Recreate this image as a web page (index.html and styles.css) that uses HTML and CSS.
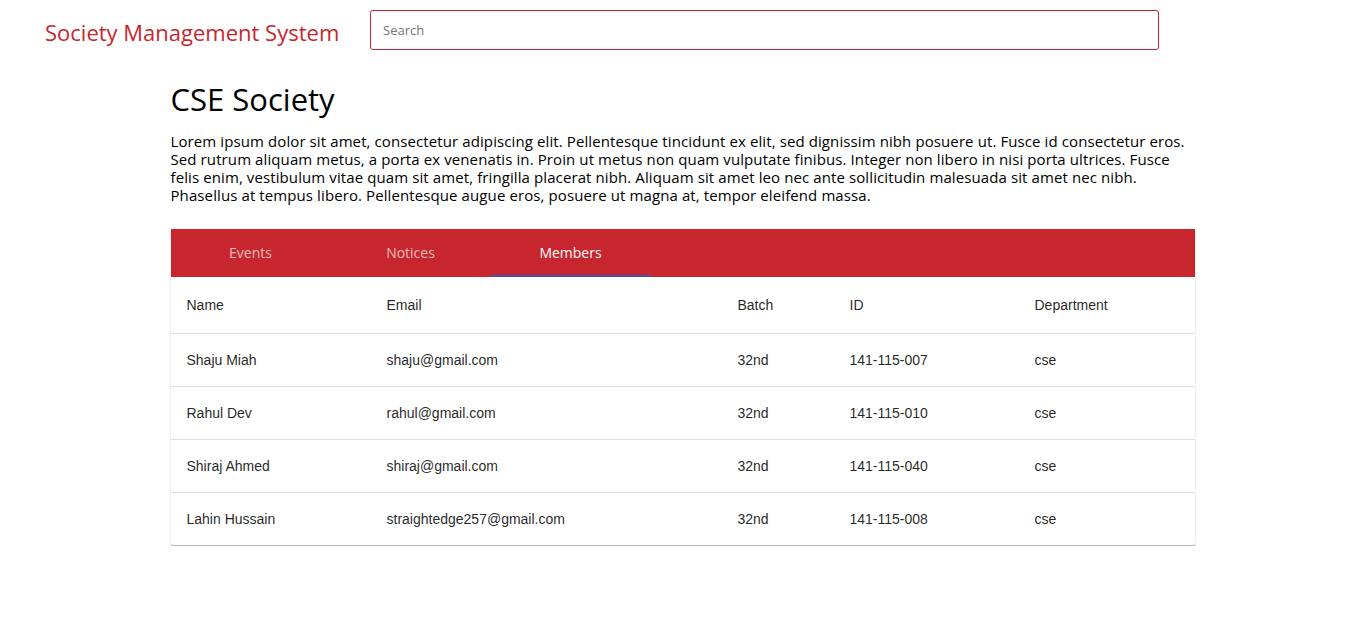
FILE: index.html
```html
<!DOCTYPE html>
<html>
<head>
<meta charset="utf-8">
<title>Society Management System</title>
<link rel="stylesheet" href="styles.css">
</head>
<body>
<header class="topbar">
  <div class="brand">Society Management System</div>
  <input class="search" type="text" placeholder="Search">
</header>
<main class="container">
  <h1 class="title">CSE Society</h1>
  <p class="desc">Lorem ipsum dolor sit amet, consectetur adipiscing elit. Pellentesque tincidunt ex elit, sed dignissim nibh posuere ut. Fusce id consectetur eros. Sed rutrum aliquam metus, a porta ex venenatis in. Proin ut metus non quam vulputate finibus. Integer non libero in nisi porta ultrices. Fusce felis enim, vestibulum vitae quam sit amet, fringilla placerat nibh. Aliquam sit amet leo nec ante sollicitudin malesuada sit amet nec nibh. Phasellus at tempus libero. Pellentesque augue eros, posuere ut magna at, tempor eleifend massa.</p>
  <section class="card">
    <nav class="tabs">
      <div class="tab">Events</div>
      <div class="tab">Notices</div>
      <div class="tab active">Members</div>
    </nav>
    <table class="members">
      <thead>
        <tr><th class="c-name">Name</th><th class="c-email">Email</th><th class="c-batch">Batch</th><th class="c-id">ID</th><th>Department</th></tr>
      </thead>
      <tbody>
        <tr><td>Shaju Miah</td><td>shaju@gmail.com</td><td>32nd</td><td>141-115-007</td><td>cse</td></tr>
        <tr><td>Rahul Dev</td><td>rahul@gmail.com</td><td>32nd</td><td>141-115-010</td><td>cse</td></tr>
        <tr><td>Shiraj Ahmed</td><td>shiraj@gmail.com</td><td>32nd</td><td>141-115-040</td><td>cse</td></tr>
        <tr><td>Lahin Hussain</td><td>straightedge257@gmail.com</td><td>32nd</td><td>141-115-008</td><td>cse</td></tr>
      </tbody>
    </table>
  </section>
</main>
</body>
</html>
```

FILE: styles.css
```css
* { box-sizing: border-box; }
body {
  margin: 0;
  font-family: "Open Sans", "Noto Sans", sans-serif;
  color: #000;
  background: #fff;
}
.topbar {
  display: flex;
  align-items: center;
  height: 60px;
  padding-left: 45px;
}
.brand {
  color: #c8262e;
  font-size: 22px;
  width: 325px;
  white-space: nowrap;
  padding-top: 4px;
}
.search {
  width: 789px;
  height: 40px;
  border: 1px solid #c8262e;
  border-radius: 3px;
  padding: 0 12px;
  font-family: "Open Sans", sans-serif;
  font-size: 13px;
  outline: none;
}
.search::placeholder { color: #757575; }
.container {
  width: 1024px;
  margin: 0 auto;
}
.title {
  font-weight: 400;
  font-size: 31px;
  margin: 20px 0 0;
  line-height: 38px;
}
.desc {
  margin: 14px 0 25px;
  font-size: 15px;
  line-height: 18px;
  letter-spacing: 0.1px;
}
.card {
  box-shadow: 0 1px 2px 0 rgba(0,0,0,.2), 0 0 1px 0 rgba(0,0,0,.15);
  border-bottom: 1px solid #b4b4b4;
  border-radius: 0 0 3px 3px;
  background: #fff;
}
.tabs {
  display: flex;
  height: 48px;
  background: #c8262e;
}
.tab {
  width: 160px;
  display: flex;
  align-items: center;
  justify-content: center;
  color: rgba(255,255,255,0.7);
  font-size: 14px;
  border-bottom: 2px solid transparent;
}
.tab.active {
  color: #fff;
  border-bottom-color: #3f51b5;
}
.members {
  width: 100%;
  border-collapse: collapse;
  font-family: "Liberation Sans", Arial, sans-serif;
  font-size: 14px;
  color: rgba(0,0,0,0.87);
}
.members th {
  font-weight: 400;
  text-align: left;
  height: 56px;
  padding: 0 16px;
  border-bottom: 1px solid #e0e0e0;
}
.members td {
  height: 53px;
  padding: 0 16px;
  border-bottom: 1px solid #e0e0e0;
}
.members tbody tr:last-child td { border-bottom: none; }
.c-name { width: 200px; }
.c-email { width: 351px; }
.c-batch { width: 112px; }
.c-id { width: 185px; }
```
